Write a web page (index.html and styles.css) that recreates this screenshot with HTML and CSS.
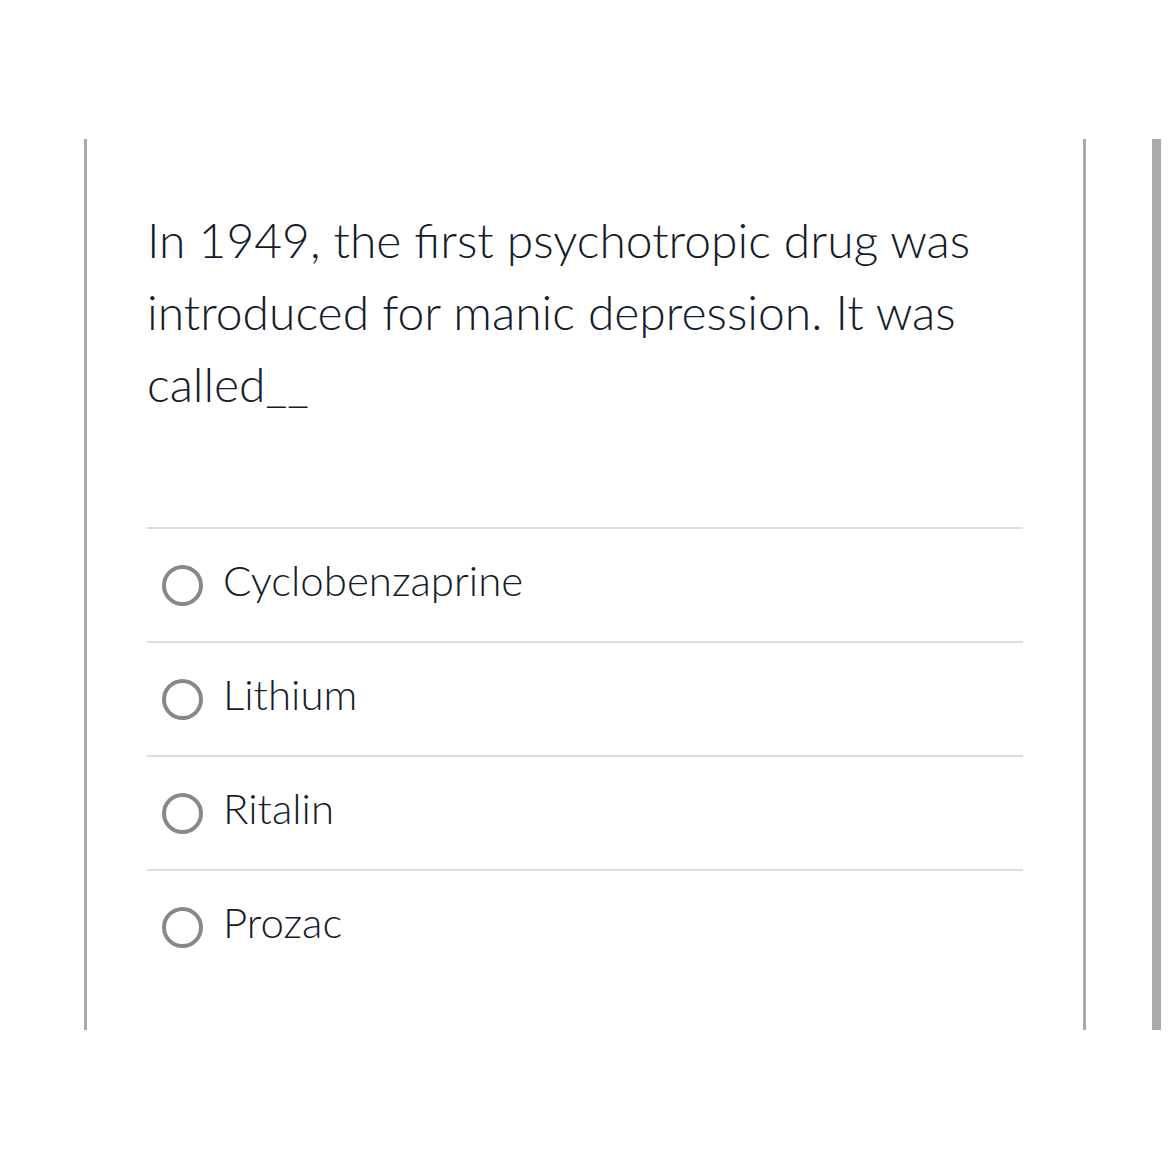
FILE: index.html
```html
<!DOCTYPE html>
<html lang="en">
<head>
<meta charset="utf-8">
<link rel="stylesheet" href="styles.css">
</head>
<body>
<div class="page">
  <div class="card">
    <div class="question">In 1949, the first psychotropic drug was introduced for manic depression. It was called__</div>
    <div class="answers">
      <div class="answer"><span class="radio"></span><span class="label">Cyclobenzaprine</span></div>
      <div class="answer"><span class="radio"></span><span class="label">Lithium</span></div>
      <div class="answer"><span class="radio"></span><span class="label">Ritalin</span></div>
      <div class="answer"><span class="radio"></span><span class="label">Prozac</span></div>
    </div>
  </div>
  <div class="scrollbar"></div>
</div>
</body>
</html>
```
FILE: styles.css
```css
html, body {
  margin: 0;
  padding: 0;
  background: #fff;
}
body {
  font-family: Lato, "Open Sans", sans-serif;
  font-weight: 300;
  color: #141c2b;
}
.page {
  display: flex;
  align-items: flex-start;
  padding-top: 139px;
  padding-left: 84px;
}
.card {
  width: 876px;
  height: 891px;
  border-left: 3px solid #aaaaaa;
  border-right: 3px solid #aaaaaa;
  padding: 0 60px;
  box-sizing: content-box;
}
.scrollbar {
  width: 9px;
  height: 891px;
  background: #aaaaaa;
  margin-left: 66px;
}
.question {
  margin-top: 65px;
  font-size: 48px;
  line-height: 72px;
}
.answers {
  margin-top: 107px;
}
.answer {
  display: flex;
  align-items: center;
  height: 112px;
  border-top: 2px solid #dddddd;
}
.radio {
  width: 33px;
  height: 33px;
  border: 4px solid #888888;
  border-radius: 50%;
  margin-left: 15px;
  margin-right: 20px;
  flex: none;
}
.label {
  font-size: 42px;
  padding-bottom: 10px;
}
```
